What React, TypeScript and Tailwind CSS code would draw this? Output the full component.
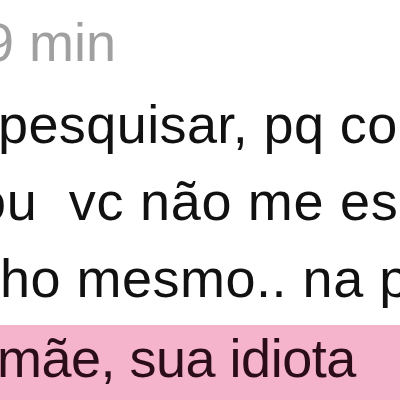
export default function App() {
  const font = { fontFamily: "'Liberation Sans', Arial, sans-serif" };
  return (
    <div
      className="relative h-[400px] w-[400px] overflow-hidden bg-white pt-[4px] text-[54px] text-[#111111]"
      style={font}
    >
      <div className="ml-[-16px] whitespace-pre leading-[77px] text-[#a0a0a0]">9 min</div>
      <div className="ml-[-2px] mt-[5px] whitespace-pre leading-[77px] tracking-[0.4px]">pesquisar, pq conheço</div>
      <div className="ml-[-24px] whitespace-pre leading-[77px] tracking-[0.7px]">ou  vc não me esqueço</div>
      <div className="ml-[0px] whitespace-pre leading-[77px] tracking-[0.5px]">ho mesmo.. na parte</div>
      <div className="mt-[8px] h-[80px] w-full bg-[#f5b4cb]">
        <div className="ml-[-3px] whitespace-pre leading-[66px] tracking-[-0.5px] text-[#2b0d1a]">mãe, sua idiota</div>
      </div>
    </div>
  );
}
